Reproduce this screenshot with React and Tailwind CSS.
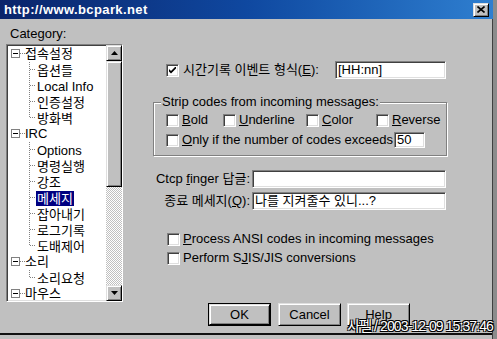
import React from "react";

const raised =
  "border border-t-[#dfdfdf] border-l-[#dfdfdf] border-r-black border-b-black shadow-[inset_1px_1px_0_#fff,inset_-1px_-1px_0_#808080] bg-[#c0c0c0]";
const sunken =
  "border border-t-[#808080] border-l-[#808080] border-r-white border-b-white shadow-[inset_1px_1px_0_#404040,inset_-1px_-1px_0_#dfdfdf] bg-white";

const treeItems = [
  { t: "접속설정", l: 0 },
  { t: "옵션들", l: 1 },
  { t: "Local Info", l: 1 },
  { t: "인증설정", l: 1 },
  { t: "방화벽", l: 1, last: true },
  { t: "IRC", l: 0 },
  { t: "Options", l: 1 },
  { t: "명령실행", l: 1 },
  { t: "강조", l: 1 },
  { t: "메세지", l: 1, sel: true },
  { t: "잡아내기", l: 1 },
  { t: "로그기록", l: 1 },
  { t: "도배제어", l: 1, last: true },
  { t: "소리", l: 0 },
  { t: "소리요청", l: 1, last: true },
  { t: "마우스", l: 0 },
];

// classic win9x checkbox
function Check({ checked }) {
  return (
    <span className={`${sunken} w-[13px] h-[13px] shrink-0 flex items-center justify-center`}>
      {checked && (
        <svg width="7" height="7" viewBox="0 0 7 7">
          <path d="M0 2 L2 4 L7 -1 L7 1.5 L2 6.5 L0 4.5 Z" fill="#000" />
        </svg>
      )}
    </span>
  );
}

function Arrow({ up }) {
  return (
    <svg width="7" height="4" viewBox="0 0 7 4">
      <path d={up ? "M3.5 0 L7 4 L0 4 Z" : "M0 0 L7 0 L3.5 4 Z"} fill="#000" />
    </svg>
  );
}

function TreeRow({ item }) {
  if (item.l === 0) {
    return (
      <div className="h-[16px] flex items-center shrink-0">
        <svg className="ml-[4px] shrink-0" width="14" height="16" viewBox="0 0 14 16">
          <rect x="0.5" y="3.5" width="8" height="8" fill="#fff" stroke="#808080" />
          <path d="M2 7.5 H7" stroke="#000" />
          <path d="M9 7.5 H14" stroke="#808080" strokeDasharray="1 1" />
        </svg>
        <span className="whitespace-nowrap leading-[16px]">{item.t}</span>
      </div>
    );
  }
  return (
    <div className="h-[16px] flex items-center shrink-0">
      <svg className="ml-[22px] shrink-0" width="8" height="16" viewBox="0 0 8 16">
        <path d={item.last ? "M0.5 0 V8" : "M0.5 0 V16"} stroke="#808080" strokeDasharray="1 1" />
        <path d="M1 7.5 H7" stroke="#808080" strokeDasharray="1 1" />
      </svg>
      <span
        className={`whitespace-nowrap leading-[15px] -ml-px px-px ${
          item.sel ? "bg-[#000080] text-white" : ""
        }`}
      >
        {item.t}
      </span>
    </div>
  );
}

const App = () => {
  return (
    <div className="w-[497px] h-[339px] overflow-hidden relative flex bg-[#8c8c8c] text-[13px] text-black font-['Liberation_Sans','Noto_Sans_CJK_KR',sans-serif]">
      <div className="w-[493px] h-full flex flex-col bg-[#c0c0c0]">
        {/* title bar */}
        <div className="h-[19px] shrink-0 flex items-center bg-gradient-to-r from-[#0a246a] via-[#0f48a0] to-[#2f7fd0]">
          <span className="pl-[4px] text-white font-bold text-[13px] tracking-[0.4px]">http://www.bcpark.net</span>
          <div className={`${raised} ml-auto mr-[4px] w-[16px] h-[14px] flex items-center justify-center`}>
            <svg width="8" height="7" viewBox="0 0 8 7">
              <path d="M0.5 0.5 L7.5 6.5 M7.5 0.5 L0.5 6.5" stroke="#000" strokeWidth="1.6" />
            </svg>
          </div>
        </div>

        <div className="flex-1 flex flex-col border-r border-[#404040]">
          <div className="flex h-[283px]">
            {/* category tree */}
            <div className="pl-[6px] pt-[7px] w-[123px] shrink-0">
              <div className="pl-[4px] h-[16px] leading-[16px]">Category:</div>
              <div className={`${sunken} mt-[2px] w-[117px] h-[258px] flex overflow-hidden`}>
                <div className="flex-1 flex flex-col pt-px overflow-hidden">
                  {treeItems.map((it, i) => (
                    <TreeRow key={i} item={it} />
                  ))}
                </div>
                <div className="w-[16px] flex flex-col shrink-0">
                  <div className={`${raised} h-[16px] flex items-center justify-center`}>
                    <Arrow up />
                  </div>
                  <div className={`${raised} h-[126px]`} />
                  <div className="flex-1 bg-[repeating-conic-gradient(#c0c0c0_0_25%,#ffffff_0_50%)] bg-[length:2px_2px]" />
                  <div className={`${raised} h-[16px] flex items-center justify-center`}>
                    <Arrow />
                  </div>
                </div>
              </div>
            </div>

            {/* options */}
            <div className="ml-[30px] w-[294px] flex flex-col">
              <div className="mt-[42px] h-[18px] flex items-center">
                <span className="ml-[13px]">
                  <Check checked />
                </span>
                <span className="ml-[4px] whitespace-nowrap">
                  시간기록 이벤트 형식(<u>E</u>):
                </span>
                <div className={`${sunken} ml-auto mr-px w-[111px] h-[18px] pl-[2px] leading-[15px]`}>[HH:nn]</div>
              </div>

              <div className="mt-[23px] h-[54px] relative border border-[#808080] shadow-[inset_1px_1px_0_#fff,1px_1px_0_#fff]">
                <span className="absolute -top-[9px] left-[7px] px-px bg-[#c0c0c0] leading-[16px] whitespace-nowrap">
                  Strip codes from incoming messages:
                </span>
                <div className="pt-[9px] pl-[12px] flex flex-col gap-[4px]">
                  <div className="h-[16px] flex items-center">
                    <div className="w-[57px] flex items-center">
                      <Check />
                      <span className="ml-[3px]">
                        <u>B</u>old
                      </span>
                    </div>
                    <div className="w-[83px] flex items-center">
                      <Check />
                      <span className="ml-[3px]">
                        <u>U</u>nderline
                      </span>
                    </div>
                    <div className="w-[70px] flex items-center">
                      <Check />
                      <span className="ml-[3px]">
                        <u>C</u>olor
                      </span>
                    </div>
                    <div className="flex items-center">
                      <Check />
                      <span className="ml-[3px]">
                        <u>R</u>everse
                      </span>
                    </div>
                  </div>
                  <div className="h-[16px] flex items-center">
                    <Check />
                    <span className="ml-[3px] whitespace-nowrap">
                      <u>O</u>nly if the number of codes exceeds
                    </span>
                    <div className={`${sunken} ml-px w-[31px] h-[16px] pl-[2px] leading-[13px]`}>50</div>
                  </div>
                </div>
              </div>

              <div className="mt-[14px] h-[18px] flex items-center">
                <span className="w-[97px] text-right whitespace-nowrap">
                  Ctcp <u>f</u>inger 답글:
                </span>
                <div className={`${sunken} ml-[2px] w-[194px] h-[18px]`} />
              </div>
              <div className="mt-[4px] h-[18px] flex items-center">
                <span className="w-[97px] text-right whitespace-nowrap">
                  종료 메세지(<u>Q</u>):
                </span>
                <div className={`${sunken} ml-[2px] w-[194px] h-[18px] pl-[2px] leading-[15px] whitespace-nowrap`}>
                  나를 지켜줄수 있니...?
                </div>
              </div>

              <div className="mt-[21px] h-[16px] flex items-center pl-[14px]">
                <Check />
                <span className="ml-[3px] whitespace-nowrap">
                  <u>P</u>rocess ANSI codes in incoming messages
                </span>
              </div>
              <div className="mt-[3px] h-[16px] flex items-center pl-[14px]">
                <Check />
                <span className="ml-[3px] whitespace-nowrap">
                  Perform S<u>J</u>IS/JIS conversions
                </span>
              </div>
            </div>
          </div>

          {/* buttons */}
          <div className="mt-px h-[23px] flex pl-[208px] gap-[7px]">
            <div className="w-[63px] h-[23px] border border-black">
              <div className={`${raised} w-full h-full flex items-center justify-center`}>OK</div>
            </div>
            <div className={`${raised} w-[63px] h-[23px] flex items-center justify-center`}>Cancel</div>
            <div className={`${raised} -ml-px w-[63px] h-[23px] flex items-center justify-center`}>Help</div>
          </div>

          <div className="mt-[7px] h-[2px] bg-[#101010]" />
        </div>
      </div>
      <div className="w-[4px] h-full" />

      {/* capture watermark */}
      <span className="absolute right-[4px] bottom-[4px] leading-[17px] text-[14px] tracking-[-0.9px] text-white whitespace-nowrap [text-shadow:1px_1px_0_#000,-1px_-1px_0_#000,1px_-1px_0_#000,-1px_1px_0_#000]">
        사펠 / 2003-12-09 15:37:46
      </span>
    </div>
  );
};

export default App;
